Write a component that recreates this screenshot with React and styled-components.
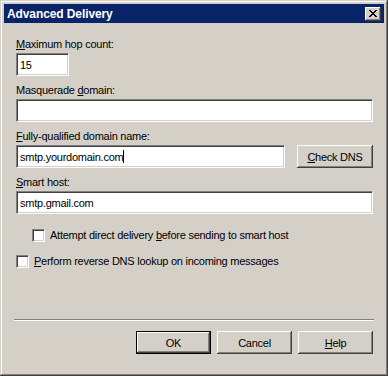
import React from 'react';
import styled, { createGlobalStyle } from 'styled-components';

const GlobalStyle = createGlobalStyle`
  body {
    margin: 0;
    background: #d4d0c8;
    font-family: "Liberation Sans", Arial, sans-serif;
    font-size: 11px;
    letter-spacing: -0.25px;
    color: #000;
  }
`;

const Window = styled.div`
  width: 388px;
  height: 376px;
  box-sizing: border-box;
  padding: 4px;
  background: #d4d0c8;
  box-shadow: inset -1px -1px #404040, inset 1px 1px #d4d0c8,
    inset -2px -2px #808080, inset 2px 2px #ffffff;
  display: flex;
  flex-direction: column;
`;

const TitleBar = styled.div`
  height: 19px;
  background: #0a246a;
  color: #ffffff;
  font-weight: bold;
  font-size: 12px;
  letter-spacing: -0.1px;
  display: flex;
  align-items: center;
  justify-content: space-between;
  padding: 0 3px 0 3px;
`;

const raised = `
  box-shadow: inset -1px -1px #404040, inset 1px 1px #ffffff,
    inset -2px -2px #808080, inset 2px 2px #d4d0c8;
`;

const CloseButton = styled.div`
  width: 16px;
  height: 14px;
  background: #d4d0c8;
  ${raised}
  display: flex;
  align-items: center;
  justify-content: center;
  padding-bottom: 1px;
  box-sizing: border-box;
`;

const Content = styled.div`
  flex: 1;
  display: flex;
  flex-direction: column;
  padding: 15px 11px 0 12px;
`;

const Groups = styled.div`
  display: flex;
  flex-direction: column;
  gap: 8px;
`;

const Group = styled.div`
  display: flex;
  flex-direction: column;
  gap: 2px;
`;

const Label = styled.div`
  line-height: 13px;
  height: 13px;
  white-space: nowrap;
`;

const Field = styled.div`
  box-sizing: border-box;
  height: 23px;
  width: ${({ $width }) => ($width ? `${$width}px` : 'auto')};
  flex: ${({ $grow }) => ($grow ? 1 : 'none')};
  background: #ffffff;
  border: 1px solid;
  border-color: #808080 #ffffff #ffffff #808080;
  box-shadow: inset 1px 1px #404040, inset -1px -1px #d4d0c8;
  padding: 0 3px;
  display: flex;
  align-items: center;
  white-space: nowrap;
`;

const Caret = styled.span`
  display: inline-block;
  width: 1px;
  height: 13px;
  background: #000;
`;

const FieldRow = styled.div`
  display: flex;
  gap: 12px;
`;

const Button = styled.div`
  box-sizing: border-box;
  width: ${({ $width }) => $width || 75}px;
  height: 23px;
  background: #d4d0c8;
  display: flex;
  align-items: center;
  justify-content: center;
  white-space: nowrap;
  border: ${({ $default }) => ($default ? '1px solid #000' : 'none')};
  ${raised}
`;

const Checks = styled.div`
  display: flex;
  flex-direction: column;
  gap: 13px;
  margin-top: 15px;
`;

const CheckRow = styled.div`
  display: flex;
  align-items: center;
  gap: 5px;
  padding-left: ${({ $indent }) => $indent || 0}px;
  line-height: 13px;
  white-space: nowrap;
`;

const CheckBox = styled.div`
  box-sizing: border-box;
  width: 13px;
  height: 13px;
  background: #ffffff;
  border: 1px solid;
  border-color: #808080 #ffffff #ffffff #808080;
  box-shadow: inset 1px 1px #404040, inset -1px -1px #d4d0c8;
`;

const Footer = styled.div`
  margin-top: auto;
  display: flex;
  flex-direction: column;
  padding-bottom: 18px;
`;

const Separator = styled.div`
  border-top: 1px solid #808080;
  border-bottom: 1px solid #ffffff;
  margin: 0 -1px 10px -2px;
`;

const ButtonRow = styled.div`
  display: flex;
  justify-content: flex-end;
  gap: 6px;
`;

const CloseGlyph = () => (
  <svg width="8" height="7" viewBox="0 0 8 7" shapeRendering="crispEdges">
    <path
      d="M0 0h2v1H0zM6 0h2v1H6zM1 1h2v1H1zM5 1h2v1H5zM2 2h4v1H2zM3 3h2v1H3zM2 4h4v1H2zM1 5h2v1H1zM5 5h2v1H5zM0 6h2v1H0zM6 6h2v1H6z"
      fill="#000"
    />
  </svg>
);

const App = () => (
  <>
    <GlobalStyle />
    <Window>
      <TitleBar>
        <span>Advanced Delivery</span>
        <CloseButton>
          <CloseGlyph />
        </CloseButton>
      </TitleBar>
      <Content>
        <Groups>
          <Group>
            <Label>
              <u>M</u>aximum hop count:
            </Label>
            <Field $width={53}>15</Field>
          </Group>
          <Group>
            <Label>
              Masquerade <u>d</u>omain:
            </Label>
            <Field />
          </Group>
          <Group>
            <Label>
              <u>F</u>ully-qualified domain name:
            </Label>
            <FieldRow>
              <Field $grow>
                smtp.yourdomain.com
                <Caret />
              </Field>
              <Button $width={76}>
                <span>
                  <u>C</u>heck DNS
                </span>
              </Button>
            </FieldRow>
          </Group>
          <Group>
            <Label>
              <u>S</u>mart host:
            </Label>
            <Field>smtp.gmail.com</Field>
          </Group>
        </Groups>
        <Checks>
          <CheckRow $indent={16}>
            <CheckBox />
            <span>
              Attempt direct delivery <u>b</u>efore sending to smart host
            </span>
          </CheckRow>
          <CheckRow>
            <CheckBox />
            <span>
              <u>P</u>erform reverse DNS lookup on incoming messages
            </span>
          </CheckRow>
        </Checks>
        <Footer>
          <Separator />
          <ButtonRow>
            <Button $default>OK</Button>
            <Button>Cancel</Button>
            <Button>
              <span>
                <u>H</u>elp
              </span>
            </Button>
          </ButtonRow>
        </Footer>
      </Content>
    </Window>
  </>
);

export default App;
